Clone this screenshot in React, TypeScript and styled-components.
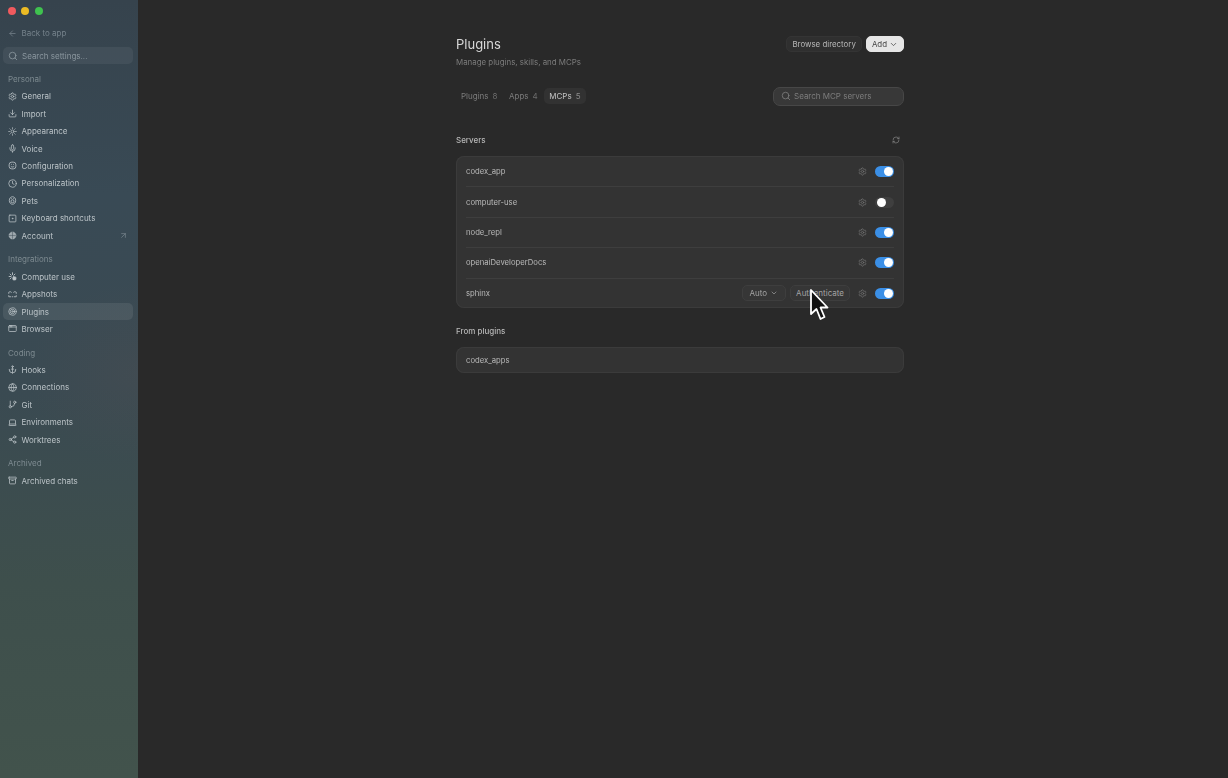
import React from 'react';
import styled, { createGlobalStyle } from 'styled-components';
import {
  Anchor, AppWindow, Archive, ArrowLeft, ArrowUpRight, ChevronDown, Download, GitBranch, Globe,
  Laptop, Mic, RefreshCw, Search, Settings, Share2, SquareDot, Sun, Target, Clock,
} from 'lucide-react';

const GlobalStyle = createGlobalStyle`
  html, body {
    margin: 0;
    height: 100%;
    background: #292929;
    font-family: Inter, "Noto Sans", sans-serif;
    overflow: hidden;
  }
  * { box-sizing: border-box; }
`;

const Page = styled.div`
  position: relative;
  display: flex;
  width: 1228px;
  height: 778px;
  overflow: hidden;
`;

const Sidebar = styled.aside`
  width: 138px;
  flex: none;
  padding: 0 5px 0 3px;
  filter: blur(0.45px);
  background:
    radial-gradient(ellipse 110px 90px at 100% 48%, rgba(90, 80, 80, 0.22), transparent),
    linear-gradient(180deg, #36434d 0%, #394a55 25%, #3a4a52 50%, #3e4f4c 75%, #42534c 100%);
`;

const Lights = styled.div`
  display: flex;
  align-items: center;
  gap: 5.5px;
  height: 22px;
  padding-left: 4.5px;
`;

const Light = styled.span<{ $color: string }>`
  width: 8px;
  height: 8px;
  border-radius: 50%;
  background: ${p => p.$color};
`;

const BackRow = styled.div`
  display: flex;
  align-items: center;
  gap: 4.5px;
  height: 18px;
  margin-top: 2px;
  padding-left: 5px;
  font-size: 8px;
  color: #75828b;
`;

const SideSearch = styled.div`
  display: flex;
  align-items: center;
  gap: 4px;
  height: 17px;
  margin-top: 5px;
  padding-left: 5px;
  border-radius: 5px;
  background: rgba(255, 255, 255, 0.06);
  font-size: 8px;
  color: #8a969e;
`;

const Group = styled.div`
  margin-top: 6.5px;
`;

const GroupLabel = styled.div`
  display: flex;
  align-items: center;
  height: 17px;
  padding-left: 5px;
  font-size: 8px;
  color: #7d8a90;
`;

const NavItem = styled.div<{ $active?: boolean }>`
  display: flex;
  align-items: center;
  gap: 4.5px;
  height: 17.45px;
  padding: 0 5px;
  border-radius: 5px;
  font-size: 8px;
  color: #bcc4c8;
  background: ${p => (p.$active ? 'rgba(255, 255, 255, 0.08)' : 'transparent')};
  svg { flex: none; }
`;

const NavText = styled.span`
  flex: 1;
`;

const Main = styled.main`
  flex: 1;
  padding-left: 318px;
  filter: blur(0.45px);
`;

const Column = styled.div`
  width: 448px;
`;

const Header = styled.header`
  display: flex;
  justify-content: space-between;
  height: 86.5px;
  padding-top: 36px;
`;

const Title = styled.h1`
  margin: 0;
  height: 17px;
  font-size: 13px;
  line-height: 17px;
  font-weight: 400;
  color: #d8d8d8;
`;

const Subtitle = styled.p`
  margin: 3px 0 0;
  font-size: 7.9px;
  line-height: 12px;
  color: #7c7c7c;
`;

const HeaderActions = styled.div`
  display: flex;
  gap: 4px;
  height: 16px;
`;

const Pill = styled.button<{ $light?: boolean }>`
  display: flex;
  align-items: center;
  gap: 2px;
  height: 16px;
  padding: 0 5px;
  border: 1px solid ${p => (p.$light ? '#e6e6e6' : '#343434')};
  border-radius: 5px;
  background: ${p => (p.$light ? '#e6e6e6' : '#2f2f2f')};
  color: ${p => (p.$light ? '#444' : '#b8b8b8')};
  font: 7.9px Inter, sans-serif;
`;

const TabBar = styled.div`
  display: flex;
  align-items: center;
  justify-content: space-between;
  height: 19px;
`;

const Tabs = styled.div`
  display: flex;
  gap: 1.5px;
`;

const Tab = styled.div<{ $active?: boolean }>`
  display: flex;
  align-items: center;
  gap: 4px;
  height: 16px;
  padding: 0 5px;
  border-radius: 5px;
  font-size: 8px;
  color: ${p => (p.$active ? '#c4c4c4' : '#7c7c7c')};
  background: ${p => (p.$active ? '#323232' : 'transparent')};
`;

const TabCount = styled.span<{ $active?: boolean }>`
  color: ${p => (p.$active ? '#8c8c8c' : '#6c6c6c')};
`;

const SearchBox = styled.div`
  display: flex;
  align-items: center;
  gap: 3px;
  width: 131px;
  height: 19px;
  padding-left: 7px;
  border: 1px solid #474747;
  border-radius: 7px;
  background: #383838;
  font-size: 8px;
  color: #7d7d7d;
`;

const SectionHead = styled.div<{ $gap: number }>`
  display: flex;
  align-items: center;
  justify-content: space-between;
  height: 16px;
  margin: ${p => p.$gap}px 0 8px;
  padding-right: 4px;
  font-size: 8px;
  font-weight: 500;
  color: #b8b8b8;
`;

const Card = styled.div`
  border-radius: 8px;
  background: #333333;
  box-shadow: inset 0 0 0 1px #3b3b3b;
  padding: 0 10px;
`;

const Row = styled.div<{ $short?: boolean }>`
  display: flex;
  align-items: center;
  gap: 4px;
  height: ${p => (p.$short ? '26px' : '30.4px')};
  padding-top: ${p => (p.$short ? '1px' : '0')};
  border-top: 1px solid #3e3e3e;
  font-size: 7.7px;
  color: #b9b9b9;
  &:first-child { border-top: none; }
`;

const RowName = styled.span`
  flex: 1;
`;

const RowButton = styled.button<{ $wide?: boolean }>`
  display: flex;
  align-items: center;
  gap: 3px;
  height: 16px;
  padding: 0 ${p => (p.$wide ? '7px' : '5px')};
  border: 1px solid #3e3e3e;
  border-radius: 5px;
  background: #363636;
  color: #a4a4a4;
  font: 8px Inter, sans-serif;
`;

const Gear = styled.span`
  display: flex;
  margin: 0 4px 0 4px;
  color: #717171;
`;

const Toggle = styled.span<{ $on: boolean }>`
  display: flex;
  align-items: center;
  justify-content: ${p => (p.$on ? 'flex-end' : 'flex-start')};
  width: 19px;
  height: 11px;
  padding: 0 1.5px;
  border-radius: 6px;
  background: ${p => (p.$on ? '#3b8fe6' : '#3f3f3f')};
  &::after {
    content: '';
    width: 9px;
    height: 9px;
    border-radius: 50%;
    background: #fff;
  }
`;

const Cursor = styled.svg`
  position: absolute;
  left: 809px;
  top: 288px;
`;

type IconProps = { size?: number };

const Config = ({ size = 9 }: IconProps) => (
  <svg width={size} height={size} viewBox="0 0 24 24" fill="none" stroke="currentColor" strokeWidth="2.2">
    <rect x="3" y="3" width="18" height="18" rx="7" />
    <path d="M9 9h.01M15 9h.01M8.5 15c2 1.5 5 1.5 7 0" strokeLinecap="round" />
  </svg>
);

const Pet = ({ size = 9 }: IconProps) => (
  <svg width={size} height={size} viewBox="0 0 24 24" fill="none" stroke="currentColor" strokeWidth="2.2">
    <path d="M12 2c5 0 8.5 4.5 8.5 10S17 22 12 22s-8.5-4.5-8.5-10S7 2 12 2Z" />
    <circle cx="12" cy="14" r="4" />
    <path d="M9 7h.01M15 7h.01" strokeLinecap="round" />
  </svg>
);

const AccountBadge = ({ size = 9 }: IconProps) => (
  <svg width={size} height={size} viewBox="0 0 24 24" fill="currentColor" fillOpacity="0.75" stroke="currentColor" strokeWidth="2">
    <circle cx="12" cy="12" r="9" strokeDasharray="3.5 1.2" />
    <path d="M12 3v18M3 12h18" stroke="#3a4852" strokeWidth="1.2" />
  </svg>
);

const ComputerUse = ({ size = 9 }: IconProps) => (
  <svg width={size} height={size} viewBox="0 0 24 24" fill="none" stroke="currentColor" strokeWidth="2.4" strokeLinecap="round">
    <path d="M12 2v5M3 12h5M5.5 5.5l3 3M18.5 5.5l-3 3M5.5 18.5l3-3" />
    <rect x="13" y="13" width="8" height="8" rx="2" fill="currentColor" />
  </svg>
);

const Appshots = ({ size = 9 }: IconProps) => (
  <svg width={size} height={size} viewBox="0 0 24 24" fill="none" stroke="currentColor" strokeWidth="2.2" strokeLinecap="round">
    <path d="M2 9V6c3-2 5-2 7 0M15 6c2-2 4-2 7 0v3M2 15v3h5M22 15v3h-5M11 18h2" />
  </svg>
);

const personal = [
  ['General', Settings], ['Import', Download], ['Appearance', Sun], ['Voice', Mic], ['Configuration', Config],
  ['Personalization', Clock], ['Pets', Pet], ['Keyboard shortcuts', SquareDot], ['Account', AccountBadge],
] as const;
const integrations = [
  ['Computer use', ComputerUse], ['Appshots', Appshots], ['Plugins', Target], ['Browser', AppWindow],
] as const;
const coding = [
  ['Hooks', Anchor], ['Connections', Globe], ['Git', GitBranch], ['Environments', Laptop], ['Worktrees', Share2],
] as const;
const archived = [['Archived chats', Archive]] as const;

const groups = [
  { label: 'Personal', items: personal },
  { label: 'Integrations', items: integrations },
  { label: 'Coding', items: coding },
  { label: 'Archived', items: archived },
];

const servers = [
  { name: 'codex_app', on: true },
  { name: 'computer-use', on: false },
  { name: 'node_repl', on: true },
  { name: 'openaiDeveloperDocs', on: true },
  { name: 'sphinx', on: true, auth: true },
];

export default function App() {
  return (
    <Page>
      <GlobalStyle />
      <Sidebar>
        <Lights>
          <Light $color="#f05a5e" />
          <Light $color="#ecbb24" />
          <Light $color="#3fc24f" />
        </Lights>
        <BackRow><ArrowLeft size={9} />Back to app</BackRow>
        <SideSearch><Search size={10} />Search settings...</SideSearch>
        {groups.map(g => (
          <Group key={g.label}>
            <GroupLabel>{g.label}</GroupLabel>
            {g.items.map(([name, Icon]) => (
              <NavItem key={name} $active={name === 'Plugins'}>
                <Icon size={9} />
                <NavText>{name}</NavText>
                {name === 'Account' && <ArrowUpRight size={9} color="#76838b" />}
              </NavItem>
            ))}
          </Group>
        ))}
      </Sidebar>
      <Main>
        <Column>
          <Header>
            <div>
              <Title>Plugins</Title>
              <Subtitle>Manage plugins, skills, and MCPs</Subtitle>
            </div>
            <HeaderActions>
              <Pill>Browse directory</Pill>
              <Pill $light>Add<ChevronDown size={9} /></Pill>
            </HeaderActions>
          </Header>
          <TabBar>
            <Tabs>
              <Tab>Plugins <TabCount>8</TabCount></Tab>
              <Tab>Apps <TabCount>4</TabCount></Tab>
              <Tab $active>MCPs <TabCount $active>5</TabCount></Tab>
            </Tabs>
            <SearchBox><Search size={10} />Search MCP servers</SearchBox>
          </TabBar>
          <SectionHead $gap={26.5}>
            Servers
            <RefreshCw size={8} color="#8a8a8a" />
          </SectionHead>
          <Card>
            {servers.map(s => (
              <Row key={s.name}>
                <RowName>{s.name}</RowName>
                {s.auth && <RowButton $wide>Auto <ChevronDown size={8} /></RowButton>}
                {s.auth && <RowButton>Authenticate</RowButton>}
                <Gear><Settings size={9} /></Gear>
                <Toggle $on={s.on} />
              </Row>
            ))}
          </Card>
          <SectionHead $gap={15}>From plugins</SectionHead>
          <Card>
            <Row $short>codex_apps</Row>
          </Card>
        </Column>
      </Main>
      <Cursor width="20" height="34" viewBox="0 0 20 34">
        <path d="M2 2 L2 26 L7.5 21 L11.5 31 L15.5 29 L11.5 19.5 L18.5 19.5 Z" fill="#111" stroke="#fff" strokeWidth="1.8" strokeLinejoin="round" />
      </Cursor>
    </Page>
  );
}
